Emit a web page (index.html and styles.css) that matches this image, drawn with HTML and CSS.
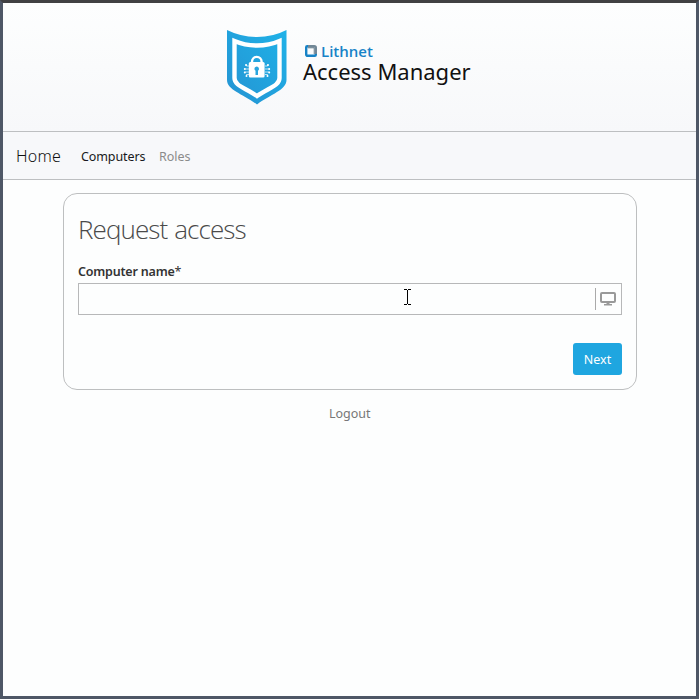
FILE: index.html
```html
<!DOCTYPE html>
<html lang="en">
<head>
<meta charset="utf-8">
<title>Lithnet Access Manager</title>
<link rel="stylesheet" href="styles.css">
</head>
<body>
<div class="window">
  <header class="banner">
    <svg class="shield" viewBox="0 0 60 76" width="60" height="76">
      <defs><linearGradient id="blue" x1="1" y1="0" x2="0" y2="1"><stop offset="0" stop-color="#1fb2e8"/><stop offset="1" stop-color="#2593d2"/></linearGradient></defs>
      <path fill="url(#blue)" d="M0 0Q14 7 30 7Q46 7 59.500 0V50C59.500 60 44 64 30 74.500C16 64 0 60 0 50Z"/>
      <path fill="none" stroke="#fff" stroke-width="4.400" d="M7.500 11Q18 15.500 30 15.500Q42 15.500 52.500 11V48C52.500 56 41 58 30 66C19 58 7.500 56 7.500 48Z"/>
      <path fill="none" stroke="#fff" stroke-width="2.400" d="M25 34V31.700a4.800 4.800 0 0 1 9.600 0V34"/>
      <rect x="21.800" y="32" width="15.800" height="15.500" rx="1.500" fill="#fff"/>
      <path fill="#2aa5de" d="M29.800 36.500a2.300 2.300 0 0 1 1.200 4.200V45H28.500V40.700a2.300 2.300 0 0 1 1.300-4.200Z"/>
      <path fill="none" stroke="#fff" stroke-width=".7" d="M22 36H19.500V34.500M22 39H17.500M22 42H17.500M22 44.500H19.500V46M38 36H40.500V34.500M38 39H42.500M38 42H42.500M38 44.500H40.500V46"/>
      <g fill="#fff"><circle cx="19" cy="35" r="1"/><circle cx="17.800" cy="39" r="1"/><circle cx="17.800" cy="42.500" r="1"/><circle cx="19.500" cy="46" r="1"/><circle cx="41" cy="35" r="1"/><circle cx="42.200" cy="39" r="1"/><circle cx="42.200" cy="42.500" r="1"/><circle cx="40.500" cy="46" r="1"/></g>
    </svg>
    <div class="wordmark">
      <div class="brand">
        <svg width="12" height="12" viewBox="0 0 12 12"><path fill="none" stroke="#1682c6" stroke-width="2.400" d="M3 1.200H2.200q-1 0-1 1V9.200q0 1.600 1.600 1.600H9.800q1 0 1-1V9"/><path fill="none" stroke="#718796" stroke-width="2.400" d="M3 1.200H9.200q1.600 0 1.600 1.600V9"/><path fill="none" stroke="#4f6b7c" stroke-width=".8" d="M3 2.800H9.200V9"/></svg>
        <span>Lithnet</span>
      </div>
      <div class="product">Access Manager</div>
    </div>
  </header>
  <nav class="navbar">
    <a class="home">Home</a>
    <a class="active">Computers</a>
    <a class="muted">Roles</a>
  </nav>
  <main class="card">
    <h1>Request access</h1>
    <label>Computer name<span>*</span></label>
    <div class="field">
      <div class="addon"><svg width="16" height="14" viewBox="0 0 16 14"><path fill="none" stroke="#999" stroke-width="2" d="M2 1H14a1 1 0 0 1 1 1V9a1 1 0 0 1-1 1H2a1 1 0 0 1-1-1V2a1 1 0 0 1 1-1Z"/><path fill="#999" d="M6.500 10h3v2H12V13.500H4V12H6.500Z"/></svg></div>
    </div>
    <div class="actions"><button>Next</button></div>
  </main>
  <footer><a>Logout</a></footer>
</div>
<svg class="cursor" width="7" height="16" viewBox="0 0 7 16" shape-rendering="crispEdges"><path fill="#000" d="M0 0H3V1H4V0H7V1H4V15H7V16H4V15H3V16H0V15H3V1H0Z"/></svg>
</body>
</html>
```
FILE: styles.css
```css
* { box-sizing: border-box; }
body {
  margin: 0;
  font-family: "Noto Sans", "Open Sans", sans-serif;
  font-size: 13px;
  color: #333;
}
.window {
  height: 699px;
  border: 3px solid #4e5766;
  border-top-color: #414143;
  background: #fdfefe;
  overflow: hidden;
}
.banner {
  height: 129px;
  display: flex;
  padding: 27px 0 0 224px;
  gap: 16px;
  background: linear-gradient(#fdfefe, #f7f8fa);
  border-bottom: 1px solid #bdbfc1;
}
.wordmark { padding-top: 12px; }
.brand {
  display: flex;
  align-items: center;
  gap: 4px;
  height: 18px;
  padding-left: 2px;
  font: 600 15px/18px "Open Sans", sans-serif;
  color: #1783c7;
}
.product {
  font: 400 22px/22px "Noto Sans", sans-serif;
  letter-spacing: 0;
  color: #111;
  white-space: nowrap;
}
.navbar {
  height: 48px;
  display: flex;
  align-items: center;
  padding-left: 13px;
  background: #f7f8fa;
  border-bottom: 1px solid #bdbfc1;
}
.home { width: 65px; font-size: 16px; font-weight: 300; letter-spacing: 0.2px; color: #111; }
.active { width: 78px; padding-top: 2px; font-size: 12.500px; letter-spacing: -0.1px; color: #181820; }
.muted { padding-top: 2px; font-size: 12.500px; color: #8b8b8b; }
.card {
  width: 574px;
  height: 197px;
  margin: 13px 0 0 60px;
  padding: 17px 14px 14px;
  border: 1px solid #bdbfc0;
  border-radius: 14px;
}
h1 {
  margin: 0;
  font: 300 26px/36px "Open Sans", sans-serif;
  letter-spacing: -0.9px;
  word-spacing: 1px;
  color: #4a4a4a;
}
label { display: block; margin-top: 16px; font-size: 12.500px; font-weight: 600; line-height: 18px; letter-spacing: -0.2px; }
label span { font-weight: 400; }
.field {
  height: 32px;
  margin-top: 2px;
  display: flex;
  justify-content: flex-end;
  align-items: center;
  border: 1px solid #b7b8b9;
}
.addon {
  width: 26px;
  height: 22px;
  display: flex;
  align-items: center;
  padding-left: 4px;
  border-left: 1px solid #aaa;
}
.actions { display: flex; justify-content: flex-end; margin-top: 28px; }
button {
  width: 49px;
  height: 32px;
  padding: 0;
  border: 0;
  border-radius: 3px;
  background: #1fa6e0;
  color: #fff;
  font: 400 12.500px "Noto Sans", sans-serif;
}
footer { margin-top: 15px; padding-left: 326px; line-height: 18px; font-size: 12.500px; color: #777; }
.cursor { position: absolute; left: 404px; top: 289px; }
```
